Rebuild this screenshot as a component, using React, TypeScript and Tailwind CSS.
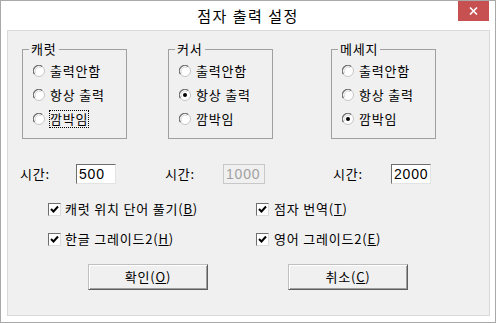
import React from "react";

const font = { fontFamily: '"Noto Sans CJK KR", "Noto Sans", sans-serif' };

const Radio = ({ checked }: { checked?: boolean }) => (
  <svg width="12" height="12" viewBox="0 0 12 12" className="shrink-0">
    <circle cx="6" cy="6" r="5.5" fill="#ffffff" stroke="#c4c4c4" strokeWidth="1" />
    <path d="M1.5 9.2 A5.5 5.5 0 0 1 9.2 1.5" fill="none" stroke="#6e6e6e" strokeWidth="1.1" />
    <path d="M2.6 8 A4 4 0 0 1 8 2.6" fill="none" stroke="#d8d8d8" strokeWidth="1" />
    {checked && <circle cx="6" cy="6" r="2" fill="#000000" />}
  </svg>
);

const Check = () => (
  <div className="w-[13px] h-[13px] shrink-0 border border-t-[#6e6e6e] border-l-[#6e6e6e] border-r-[#dcdcdc] border-b-[#dcdcdc] bg-white flex items-center justify-center">
    <svg width="9" height="9" viewBox="0 0 9 9">
      <path d="M1 4 L3.5 6.5 L8 1.5" fill="none" stroke="#000" strokeWidth="2" />
    </svg>
  </div>
);

const Group = ({
  title,
  checked,
  focus,
  className,
}: {
  title: string;
  checked: number;
  focus?: boolean;
  className?: string;
}) => {
  const items = ["출력안함", "항상 출력", "깜박임"];
  return (
    <div className={`relative w-[105px] h-[90px] border border-[#a0a0a0] pt-[9px] pl-[10px] ${className ?? ""}`}>
      <span className="absolute -top-[10px] left-[6px] bg-[#f0f0f0] px-[2px] text-[13px] leading-[18px] tracking-[0.8px]">
        {title}
      </span>
      {items.map((t, i) => (
        <div key={t} className="h-[24px] flex items-center gap-[5px]">
          <Radio checked={checked === i} />
          <span
            className={`text-[13px] leading-[16px] tracking-[0.8px] whitespace-nowrap ${
              focus && i === 2 ? "border border-dotted border-black -ml-[1px]" : ""
            }`}
          >
            {t}
          </span>
        </div>
      ))}
    </div>
  );
};

const Field = ({ value, disabled }: { value: string; disabled?: boolean }) => (
  <div
    className={`h-[20px] flex items-center pl-[2px] text-[14px] ${
      disabled
        ? "border border-[#c8c8c8] bg-[#f0f0f0] text-[#a0a0a0]"
        : "border border-t-[#6e6e6e] border-l-[#6e6e6e] border-r-[#e3e3e3] border-b-[#e3e3e3] bg-white text-black"
    }`}
    style={{ fontFamily: '"Liberation Sans", Arial, sans-serif' }}
  >
    {value}
  </div>
);

const Button = ({ children, className }: { children: React.ReactNode; className?: string }) => (
  <button
    className={`w-[120px] h-[26px] border border-t-[#c0c0c0] border-l-[#c0c0c0] border-r-[#5e5e5e] border-b-[#5e5e5e] bg-[#f0f0f0] shadow-[inset_1px_1px_0_#ffffff,inset_-1px_-1px_0_#a0a0a0] text-[13px] tracking-[0.8px] ${className ?? ""}`}
    style={font}
  >
    {children}
  </button>
);

export default function App() {
  return (
    <div className="w-[496px] h-[323px] border border-[#a9a9a9] bg-white flex flex-col text-black" style={font}>
      {/* title bar */}
      <div className="h-[29px] grid grid-cols-[1fr_auto_1fr]">
        <div />
        <div className="text-[15px] tracking-[1.5px] pt-[4px]">점자 출력 설정</div>
        <div className="flex justify-end pr-[6px]">
          <div className="w-[31px] h-[20px] bg-[#c75050] flex items-center justify-center">
            <svg width="9" height="8" viewBox="0 0 9 8">
              <path d="M1 0.5 L8 7.5 M8 0.5 L1 7.5" stroke="#ffffff" strokeWidth="1.6" />
            </svg>
          </div>
        </div>
      </div>

      {/* client area */}
      <div className="flex-1 ml-[6px] mr-[5px] mb-[6px] border border-[#d9d9d9] bg-[#f0f0f0]">
        <div className="flex pt-[18px] pl-[14px]">
          <Group title="캐럿" checked={-1} focus />
          <Group title="커서" checked={1} className="ml-[41px]" />
          <Group title="메세지" checked={2} className="ml-[58px]" />
        </div>

        <div className="flex items-center mt-[25px] pl-[12px] text-[13px] tracking-[0.8px]">
          <span className="w-[56px]">시간:</span>
          <div className="w-[40px]">
            <Field value="500" />
          </div>
          <span className="w-[58px] ml-[49px]">시간:</span>
          <div className="w-[42px]">
            <Field value="1000" disabled />
          </div>
          <span className="w-[58px] ml-[68px]">시간:</span>
          <div className="w-[40px]">
            <Field value="2000" />
          </div>
        </div>

        <div className="grid grid-cols-[208px_1fr] gap-y-[10px] mt-[15px] pl-[40px] text-[13px] tracking-[0.8px]">
          <div className="h-[20px] flex items-center gap-[4px]">
            <Check />
            <span>
              캐럿 위치 단어 풀기(<u>B</u>)
            </span>
          </div>
          <div className="h-[20px] flex items-center gap-[5px]">
            <Check />
            <span>
              점자 번역(<u>T</u>)
            </span>
          </div>
          <div className="h-[20px] flex items-center gap-[4px]">
            <Check />
            <span>
              한글 그레이드2(<u>H</u>)
            </span>
          </div>
          <div className="h-[20px] flex items-center gap-[5px]">
            <Check />
            <span>
              영어 그레이드2(<u>E</u>)
            </span>
          </div>
        </div>

        <div className="flex mt-[15px] pl-[80px]">
          <Button>
            확인(<u>O</u>)
          </Button>
          <Button className="ml-[80px]">
            취소(<u>C</u>)
          </Button>
        </div>
      </div>
    </div>
  );
}
